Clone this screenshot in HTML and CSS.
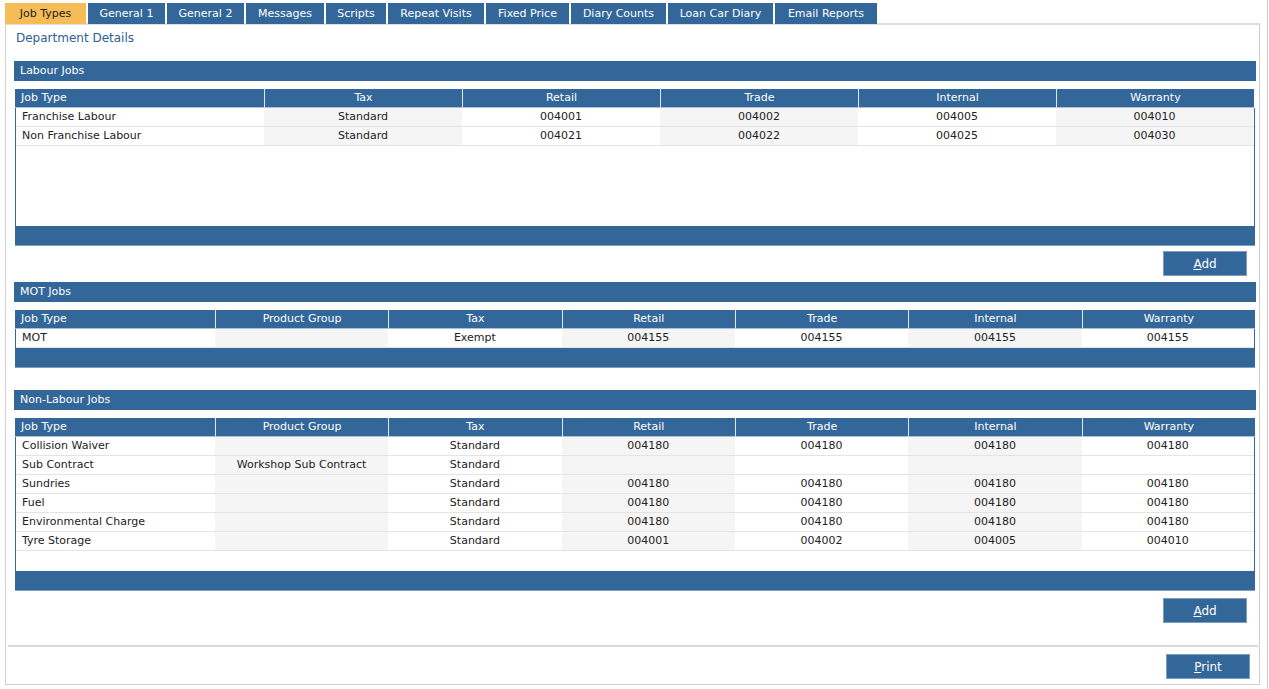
FILE: index.html
```html
<!DOCTYPE html>
<html>
<head>
<meta charset="utf-8">
<link rel="stylesheet" href="styles.css">
</head>
<body>
<div class="page">
  <div class="tabs">
    <div class="tab active">Job Types</div>
    <div class="tab">General 1</div>
    <div class="tab">General 2</div>
    <div class="tab">Messages</div>
    <div class="tab">Scripts</div>
    <div class="tab">Repeat Visits</div>
    <div class="tab">Fixed Price</div>
    <div class="tab">Diary Counts</div>
    <div class="tab">Loan Car Diary</div>
    <div class="tab">Email Reports</div>
  </div>
  <div class="panel">
    <div class="content">
      <div class="title">Department Details</div>

      <div class="section-head labour-head">Labour Jobs</div>
      <div class="grid labour">
        <div class="row head">
          <div class="c left">Job Type</div><div class="c">Tax</div><div class="c">Retail</div><div class="c">Trade</div><div class="c">Internal</div><div class="c">Warranty</div>
        </div>
        <div class="body body-labour">
          <div class="row">
            <div class="c left">Franchise Labour</div><div class="c">Standard</div><div class="c">004001</div><div class="c">004002</div><div class="c">004005</div><div class="c">004010</div>
          </div>
          <div class="row">
            <div class="c left">Non Franchise Labour</div><div class="c">Standard</div><div class="c">004021</div><div class="c">004022</div><div class="c">004025</div><div class="c">004030</div>
          </div>
        </div>
        <div class="foot"></div>
      </div>
      <div class="actions"><button class="btn"><u>A</u>dd</button></div>

      <div class="section-head">MOT Jobs</div>
      <div class="grid seven">
        <div class="row head">
          <div class="c left">Job Type</div><div class="c">Product Group</div><div class="c">Tax</div><div class="c">Retail</div><div class="c">Trade</div><div class="c">Internal</div><div class="c">Warranty</div>
        </div>
        <div class="body">
          <div class="row">
            <div class="c left">MOT</div><div class="c"></div><div class="c">Exempt</div><div class="c">004155</div><div class="c">004155</div><div class="c">004155</div><div class="c">004155</div>
          </div>
        </div>
        <div class="foot"></div>
      </div>

      <div class="section-head nonlabour-head">Non-Labour Jobs</div>
      <div class="grid seven">
        <div class="row head">
          <div class="c left">Job Type</div><div class="c">Product Group</div><div class="c">Tax</div><div class="c">Retail</div><div class="c">Trade</div><div class="c">Internal</div><div class="c">Warranty</div>
        </div>
        <div class="body body-nonlabour">
          <div class="row">
            <div class="c left">Collision Waiver</div><div class="c"></div><div class="c">Standard</div><div class="c">004180</div><div class="c">004180</div><div class="c">004180</div><div class="c">004180</div>
          </div>
          <div class="row">
            <div class="c left">Sub Contract</div><div class="c">Workshop Sub Contract</div><div class="c">Standard</div><div class="c"></div><div class="c"></div><div class="c"></div><div class="c"></div>
          </div>
          <div class="row">
            <div class="c left">Sundries</div><div class="c"></div><div class="c">Standard</div><div class="c">004180</div><div class="c">004180</div><div class="c">004180</div><div class="c">004180</div>
          </div>
          <div class="row">
            <div class="c left">Fuel</div><div class="c"></div><div class="c">Standard</div><div class="c">004180</div><div class="c">004180</div><div class="c">004180</div><div class="c">004180</div>
          </div>
          <div class="row">
            <div class="c left">Environmental Charge</div><div class="c"></div><div class="c">Standard</div><div class="c">004180</div><div class="c">004180</div><div class="c">004180</div><div class="c">004180</div>
          </div>
          <div class="row">
            <div class="c left">Tyre Storage</div><div class="c"></div><div class="c">Standard</div><div class="c">004001</div><div class="c">004002</div><div class="c">004005</div><div class="c">004010</div>
          </div>
        </div>
        <div class="foot"></div>
      </div>
      <div class="actions actions-2"><button class="btn"><u>A</u>dd</button></div>
    </div>
    <div class="bottom">
      <button class="btn print"><u>P</u>rint</button>
    </div>
  </div>
</div>
</body>
</html>
```

FILE: styles.css
```css
* { box-sizing: border-box; }
html, body { margin: 0; padding: 0; background: #fff; }
body {
  font-family: "DejaVu Sans", Verdana, sans-serif;
  font-size: 11px;
  color: #222;
  border-right: 1px solid #ccc;
  width: 1268px;
  height: 689px;
}
.page { padding: 3px 0 0 5px; }
.tabs { display: flex; gap: 2px; height: 21px; position: relative; z-index: 1; }
.tab {
  height: 21px;
  line-height: 21px;
  background: #336699;
  color: #fff;
  text-align: center;
  font-size: 11px;
}
.tab.active { background: #f6bc57; color: #222; }
.tab:nth-child(1) { width: 81px; }
.tab:nth-child(2) { width: 77px; }
.tab:nth-child(3) { width: 77px; }
.tab:nth-child(4) { width: 78px; }
.tab:nth-child(5) { width: 60px; }
.tab:nth-child(6) { width: 96px; }
.tab:nth-child(7) { width: 83px; }
.tab:nth-child(8) { width: 95px; }
.tab:nth-child(9) { width: 105px; }
.tab:nth-child(10) { width: 102px; }

.panel {
  margin-top: -1px;
  width: 1255px;
  height: 662px;
  border: 1px solid #cfcfcf;
  border-top: 2px solid #dcdcdc;
  display: flex;
  flex-direction: column;
}
.content { padding: 0 3px 0 8px; flex: 1; }
.title {
  color: #2c5f96;
  font-size: 12px;
  height: 21px;
  line-height: 26px;
  padding-left: 2px;
}
.section-head {
  height: 20px;
  line-height: 19px;
  background: #336699;
  color: #fff;
  padding-left: 6px;
  font-size: 11px;
}
.section-head.labour-head { margin-top: 15px; }
.grid { margin: 8px 1px 0 1px; }
.row { display: flex; }
.row .c {
  text-align: center;
  height: 19px;
  line-height: 18px;
  white-space: nowrap;
  overflow: hidden;
}
.row .c.left { text-align: left; padding-left: 6px; }
.head .c {
  background: #336699;
  color: #fff;
  border-left: 1px solid #dfe7f0;
  border-bottom: 1px solid #a9c0d8;
}
.head .c:first-child { border-left: none; }
.body {
  border-left: 1px solid #336699;
  border-right: 1px solid #336699;
}
.body .row { border-bottom: 1px solid #e4e4e4; }
.body .row .c { height: 18px; line-height: 17px; }
.body .row .c:nth-child(even) { background: #f5f5f5; }
.body-labour { height: 118px; }
.body-nonlabour { height: 134px; }
.foot { height: 20px; background: #336699; border-bottom: 1px solid #7f9fc0; }

.labour .c { width: 198px; }
.labour .c:first-child { width: 249px; }
.labour .body .c:first-child { width: 248px; }
.labour .body .c:last-child { width: 197px; }

.seven .c { width: 173.5px; }
.seven .c:first-child { width: 200px; }
.seven .body .c:first-child { width: 199px; }
.seven .body .c:last-child { width: 172.5px; }

.actions { display: flex; justify-content: flex-end; padding: 5px 9px 0 0; height: 36px; }
.actions-2 { padding-top: 7px; }
.btn {
  width: 84px;
  height: 25px;
  background: #336699;
  color: #fff;
  border: 1px solid #7d9dbf;
  font-family: "DejaVu Sans", Verdana, sans-serif;
  font-size: 12px;
  padding: 0;
}
.nonlabour-head { margin-top: 22px; }

.bottom {
  margin: 0 1px 0 2px;
  border-top: 2px solid #d8d8d8;
  height: 39px;
  display: flex;
  justify-content: flex-end;
  align-items: flex-start;
  padding: 7px 8px 0 0;
}
.print { width: 84px; height: 25px; }
```
